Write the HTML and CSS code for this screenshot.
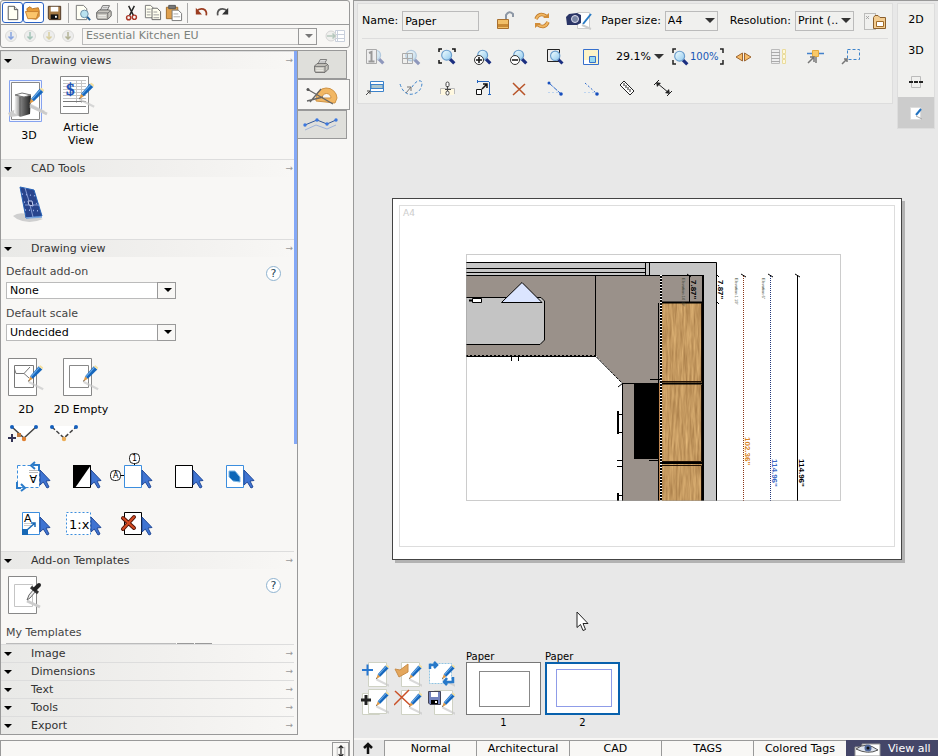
FILE: index.html
```html
<!DOCTYPE html>
<html lang="en">
<head>
<meta charset="utf-8">
<title>Drawing views</title>
<link rel="stylesheet" href="styles.css">
</head>
<body>
<svg class="defs" aria-hidden="true">
  <defs>
    <linearGradient id="lens" x1="0" y1="0" x2="1" y2="1"><stop offset="0" stop-color="#f4ffff"/><stop offset="1" stop-color="#8fc8ee"/></linearGradient>
    <linearGradient id="metal"><stop offset="0" stop-color="#fff"/><stop offset=".45" stop-color="#777"/><stop offset="1" stop-color="#222"/></linearGradient>
    <filter id="wood" x="0" y="0" width="1" height="1" color-interpolation-filters="sRGB">
      <feTurbulence type="fractalNoise" baseFrequency="0.5 0.04" numOctaves="3" seed="4"/>
      <feColorMatrix values="0.3 0 0 0 0.62  0.3 0 0 0 0.45  0.25 0 0 0 0.25  0 0 0 0 1"/>
    </filter>
    <symbol id="pencil" viewBox="0 0 20 28">
      <path d="M2 19 18 27" stroke="#c9c9c9" stroke-width="2.500" opacity=".7"/>
      <path d="M1.500 18.500 3.500 12.500 6.500 15.500z" fill="#e09a45"/>
      <path d="M3.500 12.500 13 1.500 17 5 6.500 15.500z" fill="#1667bd"/>
      <path d="M4.500 13 14 2.500" stroke="#6aaae6" stroke-width="1.300"/>
      <path d="M13 1.500 15 .5 18 3 17 5z" fill="#f3dfa0"/>
      <path d="M1 19 2 16.500 3 17.500z" fill="#555"/>
    </symbol>
    <symbol id="pointer" viewBox="0 0 12 20">
      <path d="M1 1V16L4.300 13 8 19 10 18 7 12 11 11.500z" fill="#3f74d2" stroke="#234a98"/>
    </symbol>
    <symbol id="mag" viewBox="0 0 20 20">
      <path d="M12 12 17 17" stroke="#1b2f80" stroke-width="3.500"/>
      <circle cx="8.500" cy="8" r="5.500" fill="url(#lens)" stroke="#6a9dcc" stroke-width="1.300"/>
    </symbol>
    <symbol id="sheet" viewBox="0 0 28 28">
      <path d="M7.500 2.500H25.500V26.500H7.500z" fill="#fff" stroke="#cfd2c4"/>
      <use href="#pencil" x="14" y="4" width="16" height="23"/>
    </symbol>
    <symbol id="down" viewBox="0 0 14 14">
      <circle cx="7" cy="7" r="5.500" fill="#e9eaea" stroke="#cfcfcd"/>
      <path d="M7 3V10M4.500 7.500 7 10 9.500 7.500" fill="none" stroke="currentColor" stroke-width="1.500"/>
    </symbol>
    <symbol id="printer" viewBox="0 0 20 20">
      <path d="M6 8 9 2H17L14 8" fill="#fff" stroke="#555"/>
      <path d="M9 4H15M8 6H14" stroke="#999"/>
      <path d="M2 10 5 7H17L19 9V14L15 18H3L2 16z" fill="#c9c7c0" stroke="#555"/>
      <path d="M2 10.500H15L18.500 8M15 10.500V17.500" fill="none" stroke="#666"/>
      <path d="M4 13.500H13M4 15.500H13" stroke="#f2f2ee"/>
    </symbol>
  </defs>
</svg>

<div class="app">
  <aside class="side">
    <div class="filebar">
      <div class="bar-row">
        <button class="tool framed" aria-label="New"><svg viewBox="0 0 20 20"><path d="M5.500 3.500H12L15.500 7V17.500H5.500z" fill="#fffff4" stroke="#555"/><path d="M12 3.500V7H15.500" fill="#ddd" stroke="#555"/></svg></button>
        <button class="tool framed" aria-label="Open"><svg viewBox="0 0 20 20"><path d="M3 6 6 4 9 6 15 5 16 8V14L13 17 5 16z" fill="#e79b36" stroke="#b9782b"/><path d="M1.500 9H15.500L13 16.500H4z" fill="#fbc56c" stroke="#c8812f"/></svg></button>
        <button class="tool" aria-label="Save"><svg viewBox="0 0 20 20"><path d="M3.500 3.500H16.500V17.500H4.500L3.500 16z" fill="#a57943" stroke="#4a3423"/><path d="M6 4H14V9H6z" fill="#fff"/><path d="M6 12H14V17H6z" fill="#111"/><path d="M10.500 13.500H12.500V15.500H10.500z" fill="#fff"/></svg></button>
        <span class="rule"></span>
        <button class="tool" aria-label="Preview"><svg viewBox="0 0 20 20"><path d="M3.500 2.500H11L14.500 6V17.500H3.500z" fill="#fffff4" stroke="#777"/><circle cx="12" cy="11.500" r="4" fill="#b9e2ef" stroke="#6d8ea6"/><path d="M15 14.500 18 18" stroke="#1f5d94" stroke-width="2"/></svg></button>
        <button class="tool" aria-label="Print"><svg viewBox="0 0 20 20"><use href="#printer" x="1" y="1" width="18" height="18"/></svg></button>
        <span class="rule"></span>
        <button class="tool" aria-label="Cut"><svg viewBox="0 0 20 20"><path d="M7 3 12 13M13 3 8 13" stroke="#222" stroke-width="1.500"/><circle cx="7" cy="15.500" r="2.200" fill="none" stroke="#ab3525" stroke-width="1.500"/><circle cx="13" cy="15" r="2.200" fill="none" stroke="#ab3525" stroke-width="1.500"/></svg></button>
        <button class="tool" aria-label="Copy"><svg viewBox="0 0 20 20"><path d="M2.500 2.500H8L10.500 5V15.500H2.500z" fill="#fffff0" stroke="#777"/><path d="M9.500 5.500H15L18.500 9V17.500H9.500z" fill="#fffff0" stroke="#666"/><path d="M4 6.500H8M4 9.500H8M4 12.500H8M11 9.500H15M11 12.500H17M11 15.500H17" stroke="#999"/></svg></button>
        <button class="tool" aria-label="Paste"><svg viewBox="0 0 20 20"><path d="M2.500 4.500H14.500V16.500H2.500z" fill="#dfa04d" stroke="#a06b29"/><path d="M5 2.500H12V6H5z" fill="#777" stroke="#555"/><path d="M8.500 7.500H15L18.500 11V18.500H8.500z" fill="#fff" stroke="#777"/><path d="M10 11.500H15M10 14.500H17" stroke="#aaa"/></svg></button>
        <span class="rule"></span>
        <button class="tool" aria-label="Undo"><svg viewBox="0 0 20 20"><path d="M4.500 9Q8 5 12 6.500T15 13" fill="none" stroke="#9b3c20" stroke-width="1.800"/><path d="M4 5V12H10.500z" fill="#9b3c20"/></svg></button>
        <button class="tool" aria-label="Redo"><svg viewBox="0 0 20 20"><path d="M15.500 9Q12 5 8 6.500T5 13" fill="none" stroke="#555" stroke-width="1.800"/><path d="M16 5V12H9.500z" fill="#333"/></svg></button>
      </div>
      <div class="bar-row second">
        <button class="step blue" aria-label="Step 1"><svg viewBox="0 0 14 14"><use href="#down"/></svg></button>
        <button class="step teal" aria-label="Step 2"><svg viewBox="0 0 14 14"><use href="#down"/></svg></button>
        <button class="step sand" aria-label="Step 3"><svg viewBox="0 0 14 14"><use href="#down"/></svg></button>
        <button class="step olive" aria-label="Step 4"><svg viewBox="0 0 14 14"><use href="#down"/></svg></button>
        <span class="combo catalog"><select aria-label="Catalog"><option>Essential Kitchen EU</option></select></span>
        <button class="goto" aria-label="Go to catalog"><svg viewBox="0 0 20 14"><path d="M10.500 1.500H19.500V12.500H10.500zM10 5.500H19M10 9.500H19M12.500 2V12" fill="#fff" stroke="#c9d0dc"/><circle cx="6" cy="7" r="5" fill="#f0f0ee" stroke="#d5d5d5"/><path d="M2 7H10M7.500 4.500 10 7 7.500 9.500" fill="none" stroke="#b5c7bd" stroke-width="1.500"/></svg></button>
      </div>
    </div>

    <div class="side-main">
      <div class="panel">
        <div class="sections">
          <section>
            <h2 class="head"><button>Drawing views</button></h2>
            <div class="body views">
              <button class="big low"><svg viewBox="-1 0 44 42"><path d="M1.500 .5H33.500V41.500H1.500z" fill="#f4f6fd" stroke="#86a3f0"/><path d="M3.500 2.500H31.500V39.500H3.500z" fill="#fff" stroke="#888"/><path d="M0 33 8 29 10 36 2 37z" fill="#ccc"/><path d="M7 15 14 13 23 15 22 34 12 37 6 33z" fill="url(#metal)"/><path d="M7 15 14 13 23 15 16 17z" fill="#fff" stroke="#777"/><path d="M12 17V36" stroke="#555"/><path d="M22 26 39 34" stroke="#ccc" stroke-width="3"/><use href="#pencil" x="20" y="7" width="18" height="26"/></svg><span>3D</span></button>
              <button class="big"><svg viewBox="2 0 44 42"><path d="M3.500 1.500H31.500V38.500H3.500z" fill="#fff" stroke="#888"/><path d="M6 5.500H29M6 8.500H29M6 11.500H29M6 14.500H29M6 17.500H29M6 20.500H29M6 23.500H29M19.500 5V28M24.500 5V28" stroke="#c5c5c5"/><path d="M6 26.500H29M6 31.500H29" stroke="#777"/><text x="9" y="20" class="dollar">$</text><use href="#pencil" x="21" y="6" width="18" height="28"/></svg><span>Article<br>View</span></button>
            </div>
          </section>
          <section>
            <h2 class="head"><button>CAD Tools</button></h2>
            <div class="body cad">
              <button class="solar" aria-label="Solar panel"><svg viewBox="0 0 32 40"><path d="M0 33Q6 28 18 32L30 36Q16 42 4 36z" fill="#cfcfcf"/><path d="M7 4 21 7 29 33 13 35z" fill="#29458d" stroke="#2763b7"/><path d="M13 35 29 34" stroke="#7ba6dd" stroke-width="1.500"/><path d="M9 11 23 13M11 19 26 21M12 27 28 28" stroke="#9bb0e5" stroke-width="1.500" stroke-dasharray="1 3"/><path d="M12 5 16 18 20 34M12 22H27" fill="none" stroke="#9bb0e5" stroke-width=".8"/><path d="M15 18 19 18 20 23 16 22z" fill="#1d2f6b" stroke="#c1cef3"/></svg></button>
            </div>
          </section>
          <section>
            <h2 class="head"><button>Drawing view</button></h2>
            <div class="body drawing">
              <div class="form-row">
                <div class="form">
                  <label for="addon">Default add-on</label>
                  <span class="combo"><select id="addon"><option>None</option></select></span>
                  <label for="scale">Default scale</label>
                  <span class="combo"><select id="scale"><option>Undecided</option></select></span>
                </div>
                <button class="help" aria-label="Help">?</button>
              </div>
              <div class="papers">
                <button class="big"><svg viewBox="1 0 44 42"><path d="M3.500 1.500H31.500V38.500H3.500z" fill="#fff" stroke="#888"/><path d="M9.500 8.500H28.500V30.500H9.500zM9.500 12 11 16.500H19L25 10M19 16.500 24 21" fill="none" stroke="#777"/><use href="#pencil" x="22" y="7" width="18" height="27"/></svg><span>2D</span></button>
                <button class="big"><svg viewBox="1 0 44 42"><path d="M3.500 1.500H31.500V38.500H3.500z" fill="#fff" stroke="#888"/><path d="M9.500 8.500H28.500V30.500H9.500z" fill="none" stroke="#888"/><use href="#pencil" x="22" y="7" width="18" height="27"/></svg><span>2D Empty</span></button>
              </div>
              <div class="vees">
                <button aria-label="Add node"><svg viewBox="0 0 34 20"><path d="M6 2H30L18 15z" fill="#fff"/><path d="M6 3 18 14 30 3" fill="none" stroke="#444" stroke-width="1.500"/><circle cx="6" cy="3" r="2" fill="#1560bd"/><circle cx="30" cy="3" r="2" fill="#1560bd"/><path d="M11 9H15V13H11z" fill="#c27a3e"/><circle cx="18" cy="15" r="2.200" fill="#e08030"/><path d="M2 14H10M6 10V18" stroke="#335" stroke-width="2"/></svg></button>
                <button aria-label="Remove node"><svg viewBox="0 0 34 20"><path d="M6 2H30L18 15z" fill="#fff"/><path d="M6 3 18 14 30 3" fill="none" stroke="#444" stroke-width="1.500" stroke-dasharray="4 2"/><circle cx="6" cy="3" r="2" fill="#1560bd"/><circle cx="30" cy="3" r="2" fill="#1560bd"/><circle cx="18" cy="15" r="2.200" fill="#edae57"/></svg></button>
              </div>
              <div class="picks">
                <button aria-label="Rotate text"><svg viewBox="2 0 51 47"><path d="M13.500 15.500H35.500V37.500H13.500z" fill="#fff" stroke="#3c8ede" stroke-dasharray="3 2"/><path d="M25 20.500H34M25 22.500H34" stroke="#bbb"/><text x="-33" y="-25" transform="rotate(180)" class="glyph">A</text><path d="M35 21V15H29M31 12 27 15.500 31 19M13 32V38H17M17 34 21 38 17 41" fill="none" stroke="#2b7bc9" stroke-width="2"/><use href="#pointer" x="35" y="19" width="12" height="20"/></svg></button>
                <button aria-label="Invert colours"><svg viewBox="2 0 51 47"><path d="M18.500 15.500H35.500V37.500H18.500z" fill="#fff" stroke="#000"/><path d="M18 15H36L20 38H18z"/><use href="#pointer" x="35" y="19" width="12" height="20"/></svg></button>
                <button aria-label="Number"><svg viewBox="2 0 51 47"><path d="M18.500 15.500H35.500V37.500H18.500z" fill="#fff" stroke="#3c8ede"/><path d="M28.500 13V15M15 25.500H18" stroke="#000"/><rect x="23.500" y="3.500" width="10" height="10" rx="4" fill="#fff" stroke="#222"/><text x="26" y="11" class="mini">1</text><rect x="4.500" y="20.500" width="10" height="10" rx="4" fill="#fff" stroke="#222"/><text x="7" y="28" class="mini">A</text><use href="#pointer" x="35" y="19" width="12" height="20"/></svg></button>
                <button aria-label="Frame"><svg viewBox="2 0 51 47"><path d="M18.500 15.500H35.500V37.500H18.500z" fill="#fff" stroke="#000"/><use href="#pointer" x="35" y="19" width="12" height="20"/></svg></button>
                <button aria-label="Fill"><svg viewBox="2 0 51 47"><path d="M18.500 15.500H35.500V37.500H18.500z" fill="#fff" stroke="#3c8ede"/><path d="M21 21 27 21 32 27 32 32 25 31 21 27z" fill="#0c66b8" stroke="#80b9e6"/><use href="#pointer" x="35" y="19" width="12" height="20"/></svg></button>
                <button aria-label="Text size"><svg viewBox="2 0 51 47"><path d="M18.500 15.500H35.500V37.500H18.500z" fill="#fff" stroke="#3c8ede"/><text x="20" y="25" class="glyph">A</text><path d="M20 26.500H27M20 28.500H27" stroke="#ccc"/><path d="M18 32H24V38H18z" fill="#1768b5"/><path d="M23 33 31 26M27 26H31V30" fill="none" stroke="#1768b5" stroke-width="1.500"/><use href="#pointer" x="35" y="19" width="12" height="20"/></svg></button>
                <button aria-label="Scale"><svg viewBox="2 0 51 47"><path d="M11.500 15.500H35.500V37.500H11.500z" fill="#fff" stroke="#3c8ede" stroke-dasharray="2 2"/><text x="14" y="32" class="ratio">1:x</text><use href="#pointer" x="35" y="19" width="12" height="20"/></svg></button>
                <button aria-label="Delete"><svg viewBox="2 0 51 47"><path d="M18.500 15.500H35.500V37.500H18.500z" fill="#fff" stroke="#000"/><path d="M17 21 28 31M28 20 17 32" stroke="#501408" stroke-width="4" stroke-linecap="round"/><path d="M17 21 28 31M28 20 17 32" stroke="#d44a22" stroke-width="2" stroke-linecap="round"/><use href="#pointer" x="35" y="19" width="12" height="20"/></svg></button>
              </div>
            </div>
          </section>
          <section>
            <h2 class="head"><button>Add-on Templates</button></h2>
            <div class="body templates">
              <div class="template-row">
                <button class="big" aria-label="Pick template"><svg viewBox="1 0 44 42"><path d="M3.500 1.500H31.500V38.500H3.500z" fill="#fff" stroke="#888"/><path d="M9.500 9.500H27.500V31.500H9.500z" fill="none" stroke="#c5c5c5"/><path d="M22 26 35 32" stroke="#ccc" stroke-width="3"/><path d="M22 25 24 20 29 14 31 16 25 23z" fill="#eee" stroke="#666"/><path d="M26 12 33 18" stroke="#333" stroke-width="3"/><path d="M30 14 34 10" stroke="#222" stroke-width="4" stroke-linecap="round"/></svg></button>
                <button class="help" aria-label="Help">?</button>
              </div>
              <p class="my">My Templates</p>
              <div class="lines"><i></i><i></i><i></i></div>
            </div>
          </section>
          <section><h2 class="head"><button>Image</button></h2></section>
          <section><h2 class="head"><button>Dimensions</button></h2></section>
          <section><h2 class="head"><button>Text</button></h2></section>
          <section><h2 class="head"><button>Tools</button></h2></section>
          <section><h2 class="head"><button>Export</button></h2></section>
        </div>
        <div class="scroll"><div class="thumb"></div></div>
      </div>
      <nav class="tabs">
        <button aria-label="Print"><svg viewBox="0 0 40 24"><use href="#printer" x="11" y="5" width="16" height="16"/></svg></button>
        <button class="on" aria-label="Draw"><svg viewBox="0 0 40 24"><path d="M12 16A10 10 0 0 1 33 15L31 20 12 18zM18 15H27A4.500 4.500 0 0 0 18 15z" fill="#f2b763" stroke="#cf9344" fill-rule="evenodd"/><path d="M3 6 29 21M6 19 17 6M3 18 19 14" stroke="#666" stroke-width="1.300"/><circle cx="4" cy="6.500" r="1.500" fill="#555"/></svg></button>
        <button aria-label="Lines"><svg viewBox="0 0 40 24"><path d="M3 17 14 12 25 16 34 12" fill="none" stroke="#9fb3da"/><path d="M3 12 15 7 25 11 34 7" fill="none" stroke="#345899"/><g fill="#3c78e0"><circle cx="3" cy="12" r="1.700"/><circle cx="15" cy="7" r="1.700"/><circle cx="25" cy="11" r="1.700"/><circle cx="34" cy="7" r="1.700"/></g></svg></button>
      </nav>
    </div>
    <div class="dock"><button aria-label="Expand"><svg viewBox="0 0 16 16"><path d="M4.500 4V15H12.500V4" fill="none" stroke="#bbb"/><path d="M8.500 3V14M6 5.500 8.500 3 11 5.500M6 12 8.500 14.500 11 12" fill="none" stroke="#222" stroke-width="1.300"/></svg></button></div>
  </aside>

  <main class="work">
    <header class="top">
      <div class="toolbox">
        <div class="line first">
          <label for="name">Name:</label><input id="name" type="text" value="Paper">
          <div class="trio">
            <button class="ic" aria-label="Lock"><svg viewBox="0 0 28 24"><path d="M14 11V6Q17 1 21 5V8" fill="none" stroke="#8d97a5" stroke-width="2"/><path d="M5.500 10.500H16.500V19.500H5.500z" fill="#f2bf68" stroke="#a9702f"/><path d="M6 16.500H16" stroke="#c98a35" stroke-width="3"/></svg></button>
            <button class="ic" aria-label="Refresh"><svg viewBox="0 0 28 24"><path d="M8 10Q11 3 18 7M20 13Q17 20 10 16" fill="none" stroke="#bd782b" stroke-width="3.500"/><path d="M8 10Q11 3 18 7M20 13Q17 20 10 16" fill="none" stroke="#f0b661" stroke-width="2"/><path d="M15 9H21V4zM13 14H7V19z" fill="#d28d38"/></svg></button>
            <button class="ic" aria-label="Camera"><svg viewBox="0 0 28 24"><path d="M13.500 3.500H25.500V19.500H13.500z" fill="#fff" stroke="#ccc"/><path d="M2 8 5 5 13 4 17 6V14L13 16H3z" fill="#2a3566"/><circle cx="11" cy="10" r="3.500" fill="#7986a5" stroke="#dde"/><path d="M19 15 27 5" stroke="#297bc5" stroke-width="2"/><path d="M18 16 27 20" stroke="#ccc" stroke-width="2"/></svg></button>
          </div>
          <label for="size">Paper size:</label><span class="drop size"><select id="size"><option>A4</option></select></span>
          <label for="res" class="res">Resolution:</label><span class="drop reso"><select id="res"><option>Print (..</option></select></span>
          <button class="ic small" aria-label="Paper folder"><svg viewBox="0 0 28 24"><path d="M2.500 4.500H13.500V20.500H2.500z" fill="none" stroke="#888" stroke-dasharray="1 1"/><path d="M4 7 7 10M7 7 4 10" stroke="#999" stroke-width=".8"/><path d="M11.500 8.500 13 6.500H16L18 8.500H23.500V19.500H11.500z" fill="#f3cd92" stroke="#8b5f2d"/><path d="M14.500 12.500H21.500V17.500H14.500z" fill="#fff" stroke="#a06b29"/></svg></button>
        </div>
        <div class="line">
          <button class="ic" aria-label="Zoom 1"><svg viewBox="0 0 28 24"><g opacity=".45"><use href="#mag" x="6" y="3" width="18" height="18"/></g><path d="M4.500 4.500H14.500V18.500H4.500z" fill="#eee" stroke="#aaa"/><path d="M7 8 9.500 7V16M6.500 16.500H12.500" fill="none" stroke="#999" stroke-width="2"/></svg></button>
          <button class="ic" aria-label="Zoom grid"><svg viewBox="0 0 28 24"><g opacity=".45"><use href="#mag" x="5" y="3" width="19" height="19"/></g><path d="M4.500 8.500H14.500V18.500H4.500zM4 13.500H14M9.500 9V18" fill="none" stroke="#aaa"/></svg></button>
          <button class="ic" aria-label="Zoom all"><svg viewBox="0 0 28 24"><path d="M5 7V4H8M18 4H21V7M5 15V18H8" fill="none" stroke="#111" stroke-width="1.500"/><use href="#mag" x="5" y="3" width="18" height="18"/></svg></button>
          <button class="ic" aria-label="Zoom in"><svg viewBox="0 0 28 24"><use href="#mag" x="5" y="3" width="18" height="18"/><circle cx="9" cy="15" r="4.500" fill="#fff" stroke="#333"/><path d="M6 15H12M9 12V18" stroke="#111" stroke-width="1.500"/></svg></button>
          <button class="ic" aria-label="Zoom out"><svg viewBox="0 0 28 24"><use href="#mag" x="5" y="3" width="18" height="18"/><circle cx="9" cy="15" r="4.500" fill="#fff" stroke="#333"/><path d="M6 15H12" stroke="#111" stroke-width="1.500"/></svg></button>
          <button class="ic" aria-label="Zoom window"><svg viewBox="0 0 28 24"><path d="M5.500 4.500H17.500V16.500H5.500z" fill="#eee" stroke="#222"/><use href="#mag" x="6" y="4" width="17" height="17"/></svg></button>
          <button class="ic" aria-label="Overview"><svg viewBox="0 0 28 24"><path d="M5.500 4.500H20.500V19.500H5.500z" fill="#fdf4c8" stroke="#3670cd"/><path d="M6 15H12V19H6z" fill="#fff"/><path d="M11.500 11.500H17.500V17.500H11.500z" fill="#99d9ef" stroke="#3670cd"/></svg></button>
          <span class="drop percent"><select aria-label="Zoom"><option>29.1%</option></select></span>
          <button class="full"><svg viewBox="0 0 18 20"><path d="M4 2H1V6M4 17H1V13" fill="none" stroke="#222" stroke-width="1.500"/><use href="#mag" x="0" y="2" width="18" height="18"/></svg>100%<svg class="end" viewBox="0 0 5 20"><path d="M1 2H4V6M1 17H4V13" fill="none" stroke="#222" stroke-width="1.500"/></svg></button>
          <button class="ic" aria-label="Split"><svg viewBox="0 0 28 24"><path d="M7 12 13.500 8V16zM22 12 15.500 8V16z" fill="#f7bc68" stroke="#9d6530"/></svg></button>
          <button class="ic" aria-label="List"><svg viewBox="0 0 28 24"><path d="M6.500 4.500H14.500V18.500H6.500z" fill="#eee" stroke="#bbb"/><path d="M6 7.500H15M6 10.500H15M6 13.500H15M6 16.500H15" stroke="#aaa"/><path d="M17.500 4.500H20.500V8.500H17.500zM17.500 9.500H20.500V13.500H17.500zM17.500 14.500H20.500V18.500H17.500z" fill="#fff9db" stroke="#eadc9d"/></svg></button>
          <button class="ic" aria-label="Snap"><svg viewBox="0 0 28 24"><path d="M6 8.500H23" stroke="#4381cb" stroke-width="1.500"/><path d="M11.500 5.500H17.500V11.500H11.500z" fill="#f9c968" stroke="#e5ab3e"/><path d="M15 12V18M7 18 13 12M9 12H13V17" fill="none" stroke="#777" stroke-width="1.500"/></svg></button>
          <button class="ic" aria-label="Area"><svg viewBox="0 0 28 24"><path d="M10.500 4.500H22.500V14.500H10.500z" fill="none" stroke="#3c83cb" stroke-dasharray="3 2"/><path d="M5 19 10 14M7 14H10V17" fill="none" stroke="#777" stroke-width="1.500"/></svg></button>
        </div>
        <div class="line last">
          <button class="ic" aria-label="Legend"><svg viewBox="0 0 28 24"><path d="M8.500 4.500H21.500V14.500H8.500z" fill="#fff" stroke="#3c83cb"/><path d="M9 7.500H21V11.500H9z" fill="#adc6cd" stroke="#3c83cb"/><path d="M4 18 8 14M5 14H8V17" fill="none" stroke="#444"/></svg></button>
          <button class="ic" aria-label="Curve"><svg viewBox="0 0 28 24"><path d="M2 7Q6 19 15 17T24 5Q20 1 14 10" fill="none" stroke="#3c83cb" stroke-dasharray="3 2"/><path d="M8 16 13 10M9 10H13V14" fill="none" stroke="#777"/></svg></button>
          <button class="ic" aria-label="Join"><svg viewBox="0 0 28 24"><path d="M6 11H20V18H6z" fill="#fff8e0"/><path d="M6.500 17V11.500H20.500V17" fill="none" stroke="#bbb"/><rect x="12" y="5" width="3" height="5" rx="1.500" fill="#fff" stroke="#444"/><path d="M13.500 9V15M11 12.500H17" stroke="#444"/><rect x="12" y="14" width="3" height="4" rx="1.500" fill="#fff" stroke="#444"/></svg></button>
          <button class="ic" aria-label="Resize"><svg viewBox="0 0 28 24"><path d="M7 4.500H19M19.500 5V18M7.500 3V6M18 17.500H21" stroke="#2364bd"/><path d="M6.500 12.500H11.500V17.500H6.500z" fill="#fff" stroke="#111"/><path d="M12 12 17 7M13 7H17V11" fill="none" stroke="#111" stroke-width="1.500"/></svg></button>
          <button class="ic" aria-label="Remove"><svg viewBox="0 0 28 24"><path d="M7 6 19 18M19 7 7 18" stroke="#b85327" stroke-width="1.500"/></svg></button>
          <button class="ic" aria-label="Line"><svg viewBox="0 0 28 24"><path d="M7 6 18 16" stroke="#2d6acd" stroke-dasharray="5 1"/><path d="M6 15.500H18" stroke="#bdd4ef" stroke-dasharray="2 2"/><circle cx="7" cy="6" r="1.500" fill="#174fbe"/><circle cx="19" cy="17" r="1.800" fill="#174fbe"/></svg></button>
          <button class="ic" aria-label="Dashed line"><svg viewBox="0 0 28 24"><path d="M7 6 18 16" stroke="#2d6acd" stroke-dasharray="2 2"/><path d="M6 15.500H18" stroke="#bdd4ef" stroke-dasharray="2 2"/><circle cx="19" cy="17" r="1.800" fill="#174fbe"/></svg></button>
          <button class="ic" aria-label="Ruler"><svg viewBox="0 0 28 24"><path d="M6 8 10 4 20 14 16 18z" fill="#fff" stroke="#222"/><path d="M10 6V9M12 8V11M14 10V13M16 12V15" stroke="#222"/></svg></button>
          <button class="ic" aria-label="Dimension"><svg viewBox="0 0 28 24"><path d="M7 6 19 16M9 3 4 8M22 14 17 19" stroke="#222"/><path d="M6 5 11 6 7 10zM20 17 15 16 19 12z" fill="#222"/></svg></button>
        </div>
      </div>
      <nav class="rail">
        <button>2D</button><button>3D</button>
        <button aria-label="Section"><svg viewBox="0 0 16 16"><path d="M3.500 2.500H12.500V13.500H3.500z" fill="none" stroke="#bbb"/><path d="M1 8H15" stroke="#222" stroke-width="2" stroke-dasharray="4 1"/></svg></button>
        <button class="on" aria-label="Paper"><svg viewBox="0 0 16 16"><path d="M2.500 2.500H12.500V14.500H2.500z" fill="#fff" stroke="#ddd"/><path d="M8 10 13 4" stroke="#2272c0" stroke-width="2"/><path d="M8 11 14 14" stroke="#aaa"/></svg></button>
      </nav>
    </header>

    <div class="stage">
      <div class="paper">
        <div class="margin">
          <span class="format">A4</span>
          <svg class="plan" viewBox="466 254 375 247" role="img" aria-label="Kitchen plan">
            <path d="M466 262H717V501H703V276H466z" fill="#c6c6c6"/>
            <path d="M466 262.500H716.500V501" fill="none" stroke="#000"/>
            <path d="M466 276H703V501H622V383L596 356H466z" fill="#9a918a"/>
            <path d="M466 268.500H645M466 272.500H645M466 275.500H703M645.500 262V275M649.500 262V275M595.500 275V356" stroke="#000"/>
            <path d="M466 297.500H541L544.500 301V340L540 344.500H466" fill="#c4c4c4" stroke="#000"/>
            <path d="M472.500 298.500H481.500V302.500H472.500z" fill="#fff" stroke="#000"/><path d="M469 300.500H472" stroke="#000" stroke-width="2"/>
            <path d="M501.500 302.500 522 282.500 542 302.500z" fill="#dbe5ff" stroke="#000"/>
            <path d="M466 355.500H596" stroke="#000" stroke-dasharray="2 2"/>
            <path d="M466 356.500H596L622.500 383.500V501M622 383.500H659M511.500 357V361M518.500 357V361" fill="none" stroke="#000"/>
            <path d="M596 356 622 383" stroke="#fff" stroke-dasharray="1 3"/>
            <path d="M634 383H658V459H634z"/>
            <path d="M658 383H661V501H658z" fill="#bd8550"/><path d="M658.500 303V501" stroke="#000"/>
            <path d="M661 303H702V382H661zM661 384H702V462H661zM661 464H702V501H661z" filter="url(#wood)"/>
            <path d="M661 275V501M703 275V501" stroke="#000" stroke-width="2"/>
            <path d="M661 275V501" stroke="#fff" stroke-width="2" stroke-dasharray="1 2"/>
            <path d="M662 302.500H704M662 383.500H704M662 463H704" stroke="#000" stroke-width="2"/>
            <path d="M662 381.500H701.500V303M662 461.500H701.500V385M662 465.500H701.500V501" fill="none" stroke="#231205"/>
            <path d="M650 379.500H660M649 460.500H659M618 387 623 383" stroke="#000"/>
            <path d="M618 411V434M618 493V501" stroke="#000" stroke-width="2"/><path d="M617 414.500H622M617 432.500H622M617 460.500H622M617 466.500H622M617 495.500H622" stroke="#000"/>
            <path d="M689.500 275V302M687 274 691 277M716 274 719 277M716 301 719 304M741 274 746 277M768 274 773 277M795 274 800 277" stroke="#000"/>
            <path d="M743.500 276V501" stroke="#8a3516" stroke-dasharray="1 1"/>
            <path d="M770.500 276V501" stroke="#24387a" stroke-dasharray="1 1"/>
            <path d="M797.500 275V501" stroke="#000"/>
            <g class="dims">
              <text transform="translate(691 280) rotate(90)">7.87"</text>
              <text transform="translate(718 280) rotate(90)">7.87"</text>
              <text class="orange" transform="translate(745 437) rotate(90)">102.36"</text>
              <text class="navy" transform="translate(772 459) rotate(90)">114.96"</text>
              <text transform="translate(799 459) rotate(90)">114.96"</text>
            </g>
            <g class="notes">
              <text transform="translate(682 278) rotate(90)">Elevation 14 19"</text>
              <text transform="translate(735 278) rotate(90)">Elevation 1 19"</text>
              <text transform="translate(762 278) rotate(90)">Elevation 6"</text>
            </g>
            <path d="M466.500 254.500H840.500V500.500H466.500z" fill="none" stroke="#999" stroke-dasharray="1 1"/>
          </svg>
        </div>
      </div>
      <svg class="cursor" viewBox="0 0 13 21" aria-hidden="true"><path d="M1 1V16.500L4.500 13.500 7 19.500 9.500 18.500 7 12.500H12z" fill="#fff" stroke="#222"/></svg>
    </div>

    <div class="strip">
      <div class="actions">
        <button aria-label="New paper"><svg viewBox="0 0 28 28"><use href="#sheet"/><path d="M1 10H12M6.500 4.500V15.500" stroke="#2877d0" stroke-width="2"/></svg></button>
        <button aria-label="Open paper"><svg viewBox="0 0 28 28"><use href="#sheet"/><path d="M1 9 6 10 14 4V12L5 17z" fill="#e4a75d" stroke="#c98d48"/></svg></button>
        <button aria-label="Swap paper"><svg viewBox="0 0 28 28"><path d="M2.500 3.500H24.500V23.500H2.500z" fill="#fff" stroke="#90c4e2" stroke-dasharray="2 1"/><use href="#pencil" x="14" y="4" width="16" height="23"/><path d="M3 9V5H9M7 2 10 5 7 8M26 17V22H18M20 18 17 22 20 25" fill="none" stroke="#2879c9" stroke-width="2.500"/></svg></button>
        <button aria-label="Copy paper"><svg viewBox="0 0 28 28"><path d="M1.500 5.500H18.500V26.500H1.500z" fill="#fff" stroke="#cfd2c4"/><use href="#sheet" y="-1"/><path d="M0 12H10M5 7V17" stroke="#222" stroke-width="3"/></svg></button>
        <button aria-label="Delete paper"><svg viewBox="0 0 28 28"><use href="#sheet"/><path d="M1 3 16 17M15 2 0 17" stroke="#ca5128" stroke-width="1.500"/></svg></button>
        <button aria-label="Save paper"><svg viewBox="0 0 28 28"><use href="#sheet"/><path d="M1.500 3.500H13.500V16.500H3L1.500 15z" fill="#7383bd" stroke="#445"/><path d="M4 4H11V9H4z" fill="#fff"/><path d="M4 12H11V16H4z"/><path d="M8 13H10V15H8z" fill="#fff"/></svg></button>
      </div>
      <button class="sheet"><span class="cap">Paper</span><span class="mini-page"><i></i></span><span class="num">1</span></button>
      <button class="sheet on"><span class="cap">Paper</span><span class="mini-page"><i></i></span><span class="num">2</span></button>
    </div>

    <footer class="modes">
      <button class="up" aria-label="Up"><svg viewBox="0 0 12 12"><path d="M6 12V4M2 6 6 2 10 6" fill="none" stroke="#111" stroke-width="2.500"/></svg></button>
      <button>Normal</button><button>Architectural</button><button>CAD</button><button>TAGS</button><button>Colored Tags</button>
      <button class="all"><svg viewBox="0 0 28 16"><path d="M8 3H26V15H1V6H8z" fill="#fff" stroke="#999"/><path d="M2 8Q12 0 24 9Q14 14 2 8z" fill="#dde3ee" stroke="#555"/><circle cx="14" cy="7" r="3.500" fill="#51699c"/><circle cx="14" cy="7" r="1.500" fill="#111"/></svg>View all</button>
    </footer>
  </main>
</div>
</body>
</html>
```
FILE: styles.css
```css
* { box-sizing: border-box; }

body {
  margin: 0;
  background: #f8f7f5;
  color: #000;
  font: 11px/14px "DejaVu Sans", sans-serif;
}

button, input, select { font: inherit; color: inherit; }
button { display: block; border: 0; padding: 0; background: none; }
svg { display: block; }
.defs { position: absolute; width: 0; height: 0; }

.app {
  display: grid;
  grid-template-columns: 354px minmax(0, 1fr);
  height: 100vh;
  overflow: hidden;
}

/* Sidebar */
.side {
  display: flex;
  flex-direction: column;
  border-right: 1px solid #999;
}

.filebar {
  margin-right: 3px;
  border: 1px solid #999;
  border-radius: 3px;
}
.bar-row {
  display: flex;
  align-items: center;
  height: 23px;
  padding-left: 1px;
}
.bar-row.second { border-top: 1px solid #999; padding-right: 4px; }
.tool { width: 21px; height: 21px; border: 1px solid transparent; border-radius: 3px; }
.tool svg { width: 19px; height: 19px; }
.tool.framed { border-color: #2b62c4; background: #fff; }
.rule { width: 1px; height: 20px; margin: 0 3px; background: #aaa; }
.step { width: 19px; padding: 0 2px; opacity: 0.7; }
.step svg { width: 14px; height: 14px; }
.blue { color: #5a82d8; }
.teal { color: #7fae9d; }
.sand { color: #cdbf7b; }
.olive { color: #96976f; }
.goto { margin-left: auto; }
.goto svg { width: 20px; height: 14px; }

.combo { position: relative; display: block; width: 170px; height: 17px; }
.combo select {
  appearance: none;
  display: block;
  width: 100%;
  height: 100%;
  padding: 0 3px;
  border: 1px solid #bbb;
  border-radius: 0;
  background: #fff;
}
.combo::after {
  content: "";
  position: absolute;
  inset: 0 0 0 auto;
  width: 17px;
  border: 1px solid #999;
  background: #f8f7f5;
}
.combo::before {
  content: "";
  position: absolute;
  z-index: 1;
  right: 4px;
  top: 6px;
  border: 4px solid transparent;
  border-top-color: #000;
  border-bottom: 0;
}
.catalog { width: 235px; margin-left: 4px; color: #7b817c; }
.catalog select { background: #f8f7f5; opacity: 1; }
.catalog::before { border-top-color: #777; }

.side-main { display: flex; flex: 1; margin-top: 2px; }
.panel {
  display: grid;
  grid-template-columns: 1fr 3px;
  align-self: start;
  width: 298px;
  border: 1px solid #999;
}
.thumb { height: 57.5%; background: #84a8f6; }
.scroll { height: 100%; }

.head {
  height: 18px;
  margin: 0;
  border-top: 1px solid #ddd;
  font-size: 11px;
  font-weight: 400;
  background: linear-gradient(90deg, #e9e9e7, #f1f0ee 55%, #f8f7f5);
}
.head button {
  position: relative;
  width: 100%;
  height: 17px;
  padding-left: 30px;
  text-align: left;
  color: #333;
}
.head button::before {
  content: "";
  position: absolute;
  left: 3px;
  top: 7px;
  border: 4px solid transparent;
  border-top-color: #000;
  border-bottom: 0;
}
.head button::after {
  content: "→";
  position: absolute;
  right: 1px;
  top: 1px;
  color: #999;
  font-size: 9px;
}

.big { display: flex; flex-direction: column; width: 52px; }
.big svg { width: 44px; height: 42px; flex: none; }
.big span { display: block; width: 100%; line-height: 13px; }
.views { display: flex; height: 90px; padding: 6px 0 0 6px; }
.views .big svg { margin-bottom: 4px; }
.views .big span { padding-right: 8px; }
.views .low { padding-top: 5px; }
.views .low svg { margin-bottom: 7px; }
.cad { height: 62px; padding: 6px 12px; }
.solar svg { width: 32px; height: 40px; }

.form-row, .template-row { display: flex; justify-content: space-between; align-items: flex-start; }
.drawing { height: 294px; padding: 8px 13px 0 5px; }
.form { color: #444; }
.form label { display: block; margin-bottom: 3px; }
.form .combo { color: #000; margin-bottom: 8px; }
.help {
  width: 15px;
  height: 15px;
  margin-top: 1px;
  border: 1px solid #8fb3d0;
  border-radius: 50%;
  background: #fff;
  color: #245;
  line-height: 13px;
}
.papers { display: flex; margin-top: 8px; }
.papers .big { width: 40px; }
.papers .big + .big { width: 70px; }
.papers .big svg { margin-bottom: 4px; }
.papers .big + .big svg { margin-left: 15px; }
.vees { display: flex; gap: 6px; margin-top: 8px; }
.vees svg { width: 34px; height: 20px; }
.picks { display: grid; grid-template-columns: repeat(5, 51px); margin-top: 6px; }
.picks svg { width: 51px; height: 47px; }
.glyph { font-size: 11px; }
.mini { font-size: 8px; }
.ratio { font-size: 13px; }
.dollar { font: 17px "Liberation Serif", serif; fill: #174fb8; stroke: #174fb8; stroke-width: 0.5; }

.templates { height: 75px; padding: 6px 13px 0 5px; }
.templates .help { margin-top: 3px; }
.my { margin: 9px 0 3px; color: #444; }
.lines { display: flex; gap: 1px; }
.lines i { width: 17px; height: 1px; background: #999; }
.lines i:first-child { width: 170px; background: #bbb; }

.tabs { width: 52px; }
.tabs button {
  display: grid;
  place-items: center;
  width: 49px;
  height: 29px;
  border: 1px solid #999;
  border-left: 0;
  background: #dfdfdb;
}
.tabs .on { width: 52px; height: 31px; background: #f8f7f5; }
.tabs svg { width: 40px; height: 24px; }

.dock {
  display: flex;
  justify-content: flex-end;
  height: 16px;
  margin-right: 3px;
  border: 1px solid #999;
  border-bottom: 0;
}
.dock button { width: 17px; margin-top: 1px; border: 1px solid #999; border-bottom: 0; }
.dock svg { width: 15px; height: 15px; }

/* Work area */
.work {
  display: flex;
  flex-direction: column;
  min-width: 0;
  background: #e8e8e8;
  border-top: 1px solid #999;
}
.top {
  display: grid;
  grid-template-columns: minmax(0, 1fr) 38px;
  gap: 4px;
  align-items: start;
  padding: 2px 3px 0 3px;
}
.toolbox, .rail { border: 1px solid #ddd; background: #f0f0ee; }
.line { display: flex; align-items: center; height: 36px; }
.line.first { height: 35px; margin: 0 4px; border-bottom: 1px solid #ddd; }
.line.last { height: 28px; }
.first label { margin-right: 4px; white-space: nowrap; }
.first .res { margin-left: 12px; }
.first input {
  width: 77px;
  height: 20px;
  padding: 0 2px;
  border: 1px solid #bbb;
  background: #f0f0ee;
}
.trio { display: flex; margin: 0 5px 0 9px; }
.ic { display: grid; place-items: center; width: 36px; height: 28px; flex: none; }
.ic svg { width: 28px; height: 24px; }
.ic.small { width: 28px; margin-left: 8px; }

.drop { position: relative; display: block; height: 20px; flex: none; }
.drop select {
  appearance: none;
  display: block;
  width: 100%;
  height: 100%;
  padding: 0 2px;
  border: 1px solid #bbb;
  border-radius: 0;
  background: transparent;
}
.drop::after {
  content: "";
  position: absolute;
  right: 3px;
  top: 7px;
  border: 5px solid transparent;
  border-top-color: #333;
  border-bottom: 0;
}
.size { width: 53px; }
.reso { width: 59px; }
.percent { width: 57px; padding-left: 4px; }
.percent select { border: 0; }
.full {
  display: flex;
  align-items: center;
  width: 58px;
  padding-left: 5px;
  font-size: 10px;
  color: #1757b6;
}
.full svg { width: 18px; height: 20px; flex: none; }
.full .end { width: 5px; }

.rail button {
  display: grid;
  place-items: center;
  width: 100%;
  height: 31px;
}
.rail .on { background: #ccc; }
.rail svg { width: 16px; height: 16px; }

.stage { position: relative; flex: 1; padding: 69px 36px 0 38px; }
.paper {
  max-width: 640px;
  padding: 6px 6px 12px;
  border: 1px solid #444;
  background: #fff;
  box-shadow: 3px 3px #b2b2b2;
}
.margin {
  position: relative;
  padding: 48px 53px 45px 66px;
  border: 1px solid #ddd;
}
.format { position: absolute; left: 3px; top: 0; color: #ccc; font-size: 9px; }
.plan { width: 100%; height: auto; }
.dims { font: bold 8px "Liberation Sans", sans-serif; }
.orange { fill: #d98324; }
.navy { fill: #3c68c4; }
.notes { font: 4px "Liberation Sans", sans-serif; fill: #353f30; }
.cursor { position: absolute; left: 222px; top: 482px; width: 13px; height: 21px; }

.strip { display: flex; gap: 4px; height: 88px; padding-left: 7px; }
.actions { display: grid; grid-template-columns: repeat(3, 33px); grid-auto-rows: 28px; padding-top: 10px; margin-right: 2px; }
.actions svg { width: 28px; height: 28px; }
.sheet { display: flex; flex-direction: column; align-items: stretch; width: 75px; font-size: 10px; }
.sheet .cap { padding-top: 1px; line-height: 11px; text-align: left; }
.sheet .mini-page { height: 53px; padding: 8px 10px 7px 12px; border: 1px solid #777; background: #fff; }
.mini-page i { display: block; height: 100%; border: 1px solid #888; }
.sheet.on .mini-page { border: 2px solid #0861ad; padding: 5px 6px 6px 9px; }
.sheet.on i { border-color: #8f9ce8; }
.sheet .num { line-height: 15px; }

.modes { display: flex; height: 18px; border-top: 2px solid #f8f7f5; }
.modes button {
  flex: 1 1 0;
  min-width: 0;
  padding-top: 1px;
  border: 1px solid #999;
  border-width: 1px 0 0 1px;
  background: #f8f7f5;
  white-space: nowrap;
}
.modes .up { flex: 0 0 30px; padding: 0 0 0 8px; border: 0; background: #e8e8e8; }
.up svg { width: 12px; height: 14px; }
.modes .all { display: flex; align-items: center; justify-content: center; gap: 6px; background: #444668; color: #fff; border-color: #444668; }
.all svg { width: 28px; height: 16px; flex: none; }
```
